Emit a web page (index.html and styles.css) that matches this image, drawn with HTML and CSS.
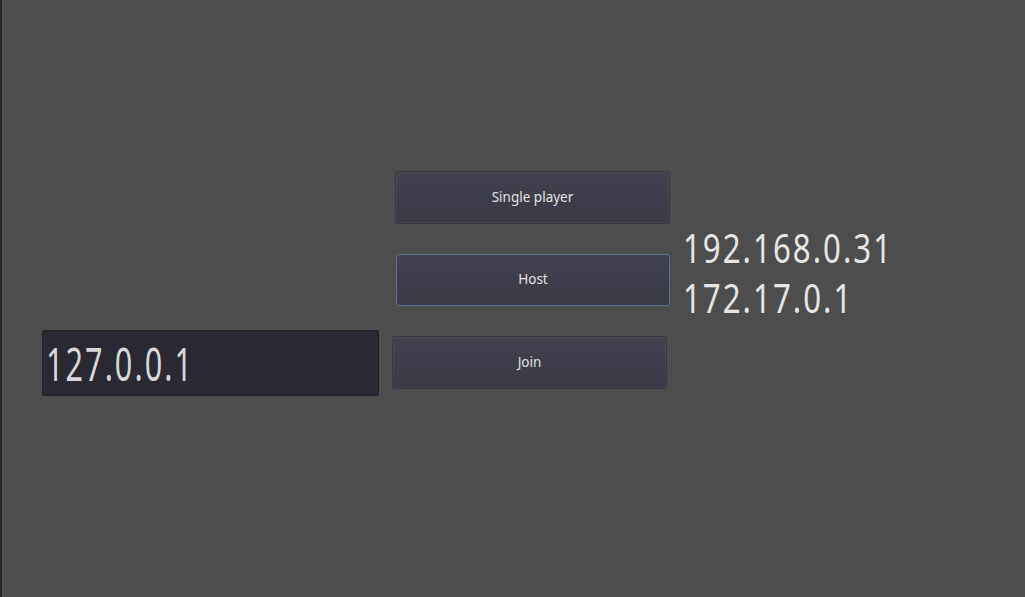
FILE: index.html
```html
<!DOCTYPE html>
<html>
<head>
<meta charset="utf-8">
<link rel="stylesheet" href="styles.css">
</head>
<body>
<div class="screen">
  <div class="edge"></div>
  <main class="stage">
    <div class="row row-single">
      <button class="btn btn-single">Single player</button>
    </div>
    <div class="row row-host">
      <button class="btn btn-host">Host</button>
      <div class="ips">
        <div class="ip">192.168.0.31</div>
        <div class="ip">172.17.0.1</div>
      </div>
    </div>
    <div class="row row-join">
      <div class="line-edit"><span class="addr">127.0.0.1</span></div>
      <button class="btn btn-join">Join</button>
    </div>
  </main>
</div>
</body>
</html>
```

FILE: styles.css
```css
html, body {
  margin: 0;
  padding: 0;
  background: #4d4d4d;
  overflow: hidden;
}
.screen {
  display: flex;
  width: 1025px;
  height: 597px;
}
.edge {
  width: 2px;
  flex: none;
  background: #23262f;
}
.stage {
  flex: 1;
  display: flex;
  flex-direction: column;
  padding-top: 171px;
}
.row {
  display: flex;
  align-items: flex-start;
}
.btn {
  box-sizing: border-box;
  width: 275px;
  height: 53px;
  margin: 0;
  padding: 0 0 2px 0;
  border: 1px solid #38373d;
  border-radius: 3px;
  background: linear-gradient(#42414f, #3a3946);
  box-shadow: inset 0 0 0 1px rgba(255,255,255,0.05);
  color: #e2e2e2;
  font-family: "Noto Sans", "DejaVu Sans", sans-serif;
  font-size: 13.5px;
  text-align: center;
}
.btn-single {
  margin-left: 393px;
}
.row-host {
  margin-top: 30px;
  height: 52px;
}
.btn-host {
  margin-left: 394px;
  width: 274px;
  height: 52px;
  border-color: #5a7191;
  box-shadow: none;
}
.ips {
  margin-left: 13px;
  margin-top: -31px;
  display: flex;
  flex-direction: column;
}
.ip {
  font-family: "Noto Sans", "DejaVu Sans", sans-serif;
  font-size: 40px;
  line-height: 50px;
  letter-spacing: 2.6px;
  color: #e6e6e6;
  transform: scaleX(0.78);
  transform-origin: left center;
  white-space: nowrap;
}
.row-join {
  margin-top: 24px;
}
.line-edit {
  box-sizing: border-box;
  margin-left: 40px;
  width: 337px;
  height: 66px;
  background: #2a2933;
  border: 1px solid #222128;
  border-radius: 2px;
  display: flex;
  align-items: center;
  padding-left: 3px;
}
.addr {
  font-family: "Noto Sans", "DejaVu Sans", sans-serif;
  font-size: 45px;
  letter-spacing: 3px;
  color: #d8d8d8;
  transform: scaleX(0.68);
  transform-origin: left center;
  white-space: nowrap;
}
.btn-join {
  margin-left: 13px;
  margin-top: 6px;
}
```
